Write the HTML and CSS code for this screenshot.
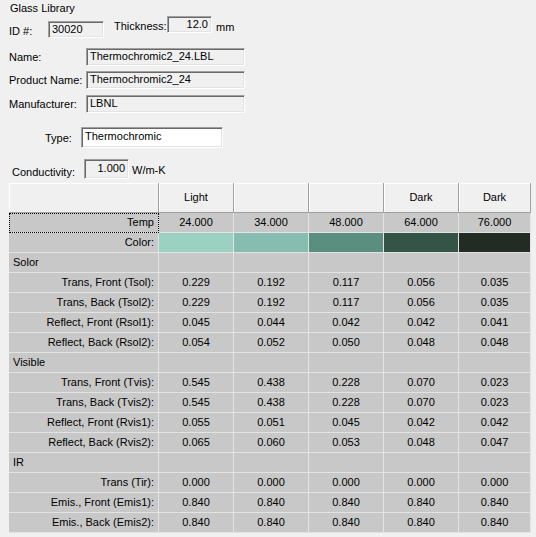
FILE: index.html
```html
<!DOCTYPE html>
<html>
<head>
<meta charset="utf-8">
<link rel="stylesheet" href="styles.css">
</head>
<body>
<div class="title">Glass Library</div>
<div class="idrow">
  <span class="lbl id-lbl">ID #:</span>
  <span class="box id-box">30020</span>
  <span class="lbl th-lbl">Thickness:</span>
  <span class="box th-box num">12.0</span>
  <span class="lbl unit mm">mm</span>
</div>
<div class="frow first"><span class="lbl flbl">Name:</span><span class="box fbox">Thermochromic2_24.LBL</span></div>
<div class="frow"><span class="lbl flbl">Product Name:</span><span class="box fbox">Thermochromic2_24</span></div>
<div class="frow"><span class="lbl flbl">Manufacturer:</span><span class="box fbox">LBNL</span></div>
<div class="typerow"><span class="lbl type-lbl">Type:</span><span class="box type-box">Thermochromic</span></div>
<div class="condrow"><span class="lbl cond-lbl">Conductivity:</span><span class="box cond-box num">1.000</span><span class="lbl unit wmk">W/m-K</span></div>

<div class="grid">
  <div class="hc"></div><div class="hc">Light</div><div class="hc"></div><div class="hc"></div><div class="hc">Dark</div><div class="hc">Dark</div>

  <div class="c lab focus">Temp</div><div class="c">24.000</div><div class="c">34.000</div><div class="c">48.000</div><div class="c">64.000</div><div class="c">76.000</div>
  <div class="c lab">Color:</div><div class="c sw sw1"></div><div class="c sw sw2"></div><div class="c sw sw3"></div><div class="c sw sw4"></div><div class="c sw sw5"></div>

  <div class="c sec">Solor</div><div class="c"></div><div class="c"></div><div class="c"></div><div class="c"></div><div class="c"></div>
  <div class="c lab">Trans, Front (Tsol):</div><div class="c">0.229</div><div class="c">0.192</div><div class="c">0.117</div><div class="c">0.056</div><div class="c">0.035</div>
  <div class="c lab">Trans, Back (Tsol2):</div><div class="c">0.229</div><div class="c">0.192</div><div class="c">0.117</div><div class="c">0.056</div><div class="c">0.035</div>
  <div class="c lab">Reflect, Front (Rsol1):</div><div class="c">0.045</div><div class="c">0.044</div><div class="c">0.042</div><div class="c">0.042</div><div class="c">0.041</div>
  <div class="c lab">Reflect, Back (Rsol2):</div><div class="c">0.054</div><div class="c">0.052</div><div class="c">0.050</div><div class="c">0.048</div><div class="c">0.048</div>

  <div class="c sec">Visible</div><div class="c"></div><div class="c"></div><div class="c"></div><div class="c"></div><div class="c"></div>
  <div class="c lab">Trans, Front (Tvis):</div><div class="c">0.545</div><div class="c">0.438</div><div class="c">0.228</div><div class="c">0.070</div><div class="c">0.023</div>
  <div class="c lab">Trans, Back (Tvis2):</div><div class="c">0.545</div><div class="c">0.438</div><div class="c">0.228</div><div class="c">0.070</div><div class="c">0.023</div>
  <div class="c lab">Reflect, Front (Rvis1):</div><div class="c">0.055</div><div class="c">0.051</div><div class="c">0.045</div><div class="c">0.042</div><div class="c">0.042</div>
  <div class="c lab">Reflect, Back (Rvis2):</div><div class="c">0.065</div><div class="c">0.060</div><div class="c">0.053</div><div class="c">0.048</div><div class="c">0.047</div>

  <div class="c sec">IR</div><div class="c"></div><div class="c"></div><div class="c"></div><div class="c"></div><div class="c"></div>
  <div class="c lab">Trans (Tir):</div><div class="c">0.000</div><div class="c">0.000</div><div class="c">0.000</div><div class="c">0.000</div><div class="c">0.000</div>
  <div class="c lab">Emis., Front (Emis1):</div><div class="c">0.840</div><div class="c">0.840</div><div class="c">0.840</div><div class="c">0.840</div><div class="c">0.840</div>
  <div class="c lab">Emis., Back (Emis2):</div><div class="c">0.840</div><div class="c">0.840</div><div class="c">0.840</div><div class="c">0.840</div><div class="c">0.840</div>
</div>
</body>
</html>
```
FILE: styles.css
```css
html, body {
  margin: 0;
  padding: 0;
  background: #f0f0f0;
}
body {
  font-family: "Liberation Sans", Arial, sans-serif;
  font-size: 11px;
  color: #000;
  width: 536px;
  height: 537px;
  overflow: hidden;
}
.title {
  height: 16px;
  line-height: 16px;
  padding-left: 10px;
}
.lbl {
  display: block;
  line-height: 13px;
  white-space: nowrap;
}
.box {
  display: block;
  box-sizing: border-box;
  border: 1px solid;
  border-color: #a0a0a0 #ffffff #ffffff #a0a0a0;
  box-shadow: inset 1px 1px 0 #696969, inset -1px -1px 0 #e3e3e3;
  background: #f0f0f0;
  padding: 0 3px;
  white-space: nowrap;
  overflow: hidden;
}
.num { text-align: right; }

.idrow {
  display: flex;
  align-items: flex-start;
  height: 24px;
}
.id-lbl { margin: 9px 0 0 9px; width: 39px; }
.id-box { margin-top: 5px; width: 56px; height: 17px; line-height: 15px; }
.th-lbl { margin: 4px 0 0 10px; width: 53px; }
.th-box { width: 45px; height: 17px; line-height: 14px; }
.mm { margin: 5px 0 0 4px; }

.frow {
  display: flex;
  align-items: flex-start;
  height: 24px;
}
.frow.first { margin-top: 8px; height: 23px; }
.flbl { margin: 3px 0 0 9px; width: 77px; }
.fbox { width: 159px; height: 18px; line-height: 15px; }

.typerow {
  display: flex;
  align-items: flex-start;
  margin-top: 8px;
  height: 21px;
}
.type-lbl { margin: 5px 0 0 45px; width: 36px; }
.type-box { width: 142px; height: 21px; line-height: 16px; background: #ffffff; }

.condrow {
  display: flex;
  align-items: flex-start;
  margin-top: 11px;
  height: 20px;
}
.cond-lbl { margin: 7px 0 0 12px; width: 72px; }
.cond-box { width: 45px; height: 20px; line-height: 16px; }
.wmk { margin: 5px 0 0 3px; }

.grid {
  display: grid;
  grid-template-columns: 150px 75px 75px 75px 75px 72px;
  grid-auto-rows: 20px;
  grid-template-rows: 30px;
  margin: 4px 0 0 9px;
  width: 522px;
}
.hc {
  box-sizing: border-box;
  background: #f0f0f0;
  border-right: 1px solid #a0a0a0;
  border-bottom: 1px solid #a0a0a0;
  box-shadow: inset 1px 1px 0 #ffffff;
  text-align: center;
  line-height: 29px;
}
.c {
  box-sizing: border-box;
  background: #c8c8c8;
  border-right: 1px solid #e3e3e3;
  border-bottom: 1px solid #e3e3e3;
  text-align: center;
  line-height: 19px;
  white-space: nowrap;
}
.c.lab {
  text-align: right;
  padding-right: 4px;
}
.c.sec {
  text-align: left;
  padding-left: 4px;
}
.focus {
  outline: 1px dotted #000;
  outline-offset: -1px;
}
.sw1 { background: #9ad1c0; }
.sw2 { background: #86bdb0; }
.sw3 { background: #5a8f80; }
.sw4 { background: #345447; }
.sw5 { background: #222c22; }
```
